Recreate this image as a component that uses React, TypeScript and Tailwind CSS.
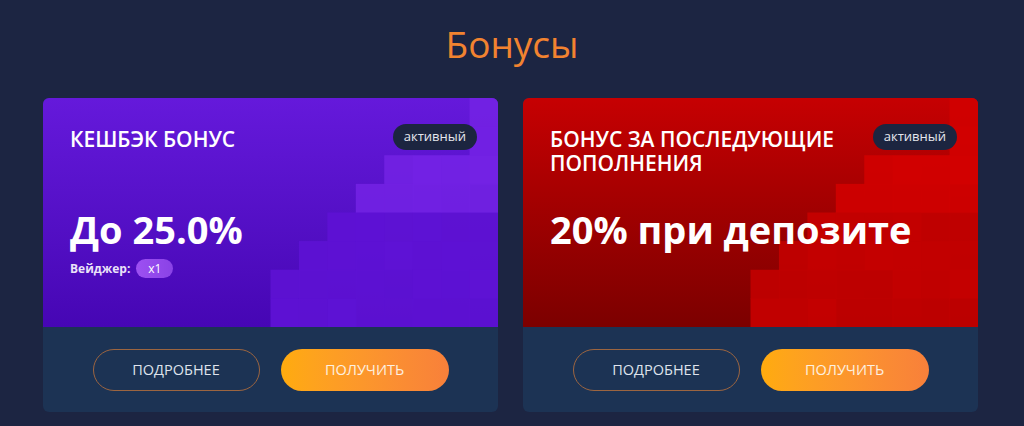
import React from "react";

const COLS = 16;
const ROWS = 8;
const W = 455;
const H = 229;
const tops: Record<number, number> = { 8: 6, 9: 5, 10: 4, 11: 3, 12: 2, 13: 2, 14: 2, 15: 0 };
const shade = [0.0, 0.05, -0.04, 0.07, -0.02, 0.04, -0.05, 0.06, 0.02, -0.04, 0.05, -0.03];

function Stairs({ top, bottom }: { top: string; bottom: string }) {
  const cw = W / COLS;
  const rh = H / ROWS;
  const cells: React.ReactNode[] = [];
  let k = 0;
  for (let c = 8; c < COLS; c++) {
    for (let r = tops[c]; r < ROWS; r++) {
      const s = shade[(c * 7 + r * 3) % shade.length];
      k++;
      const t = r / (ROWS - 1);
      cells.push(
        <rect
          key={k}
          x={c * cw}
          y={r * rh}
          width={cw + 0.5}
          height={rh + 0.5}
          fill={t < 0.5 ? top : bottom}
          opacity={0.92 + s}
        />
      );
    }
  }
  return (
    <svg
      className="absolute inset-0 w-full h-full"
      viewBox={`0 0 ${W} ${H}`}
      preserveAspectRatio="none"
    >
      {cells}
    </svg>
  );
}

function Buttons() {
  return (
    <div className="h-[85px] flex items-center justify-center gap-[21px]">
      <button className="w-[167px] h-[42px] rounded-full border border-[#9c6540] text-[14.5px] text-[#dfe3ec]">
        ПОДРОБНЕЕ
      </button>
      <button className="w-[168px] h-[42px] rounded-full bg-gradient-to-r from-[#ffab0d] to-[#f8803a] text-[14.5px] text-[#fdf0e0]">
        ПОЛУЧИТЬ
      </button>
    </div>
  );
}

function Badge() {
  return (
    <div className="h-[26px] px-[11px] -mr-[6px] rounded-full bg-[#1c2540] text-[13px] text-[#e6e8ef] flex items-center shrink-0">
      активный
    </div>
  );
}

export default function App() {
  return (
    <div
      className="w-[1024px] h-[426px] bg-[#1c2542] text-white overflow-hidden"
      style={{ fontFamily: '"Open Sans", "Noto Sans", sans-serif' }}
    >
      <h1 className="text-center text-[37px] leading-none pt-[25px] text-[#f28330] font-normal">Бонусы</h1>
      <div className="flex gap-[25px] pl-[43px] pt-[36px]">
        {/* Card 1 */}
        <div className="w-[455px] h-[314px] rounded-[6px] overflow-hidden bg-[#1c3354]">
          <div className="relative h-[229px] bg-gradient-to-b from-[#6519db] to-[#4606b4]">
            <Stairs top="#7322e4" bottom="#5e12d4" />
            <div className="relative px-[27px] pt-[26px]">
              <div className="flex justify-between items-start">
                <div className="text-[21px] font-semibold leading-[24px] mt-[3px]">КЕШБЭК БОНУС</div>
                <Badge />
              </div>
              <div className="mt-[55px] text-[38px] font-bold leading-[46px]">До 25.0%</div>
              <div className="mt-[7px] flex items-center gap-[6px]">
                <span className="text-[12px] font-bold text-[#eae2f8]">Вейджер:</span>
                <span className="h-[19px] w-[37px] rounded-full bg-gradient-to-r from-[#9d50f2] to-[#8a42e6] text-[12px] flex items-center justify-center">
                  x1
                </span>
              </div>
            </div>
          </div>
          <Buttons />
        </div>
        {/* Card 2 */}
        <div className="w-[455px] h-[314px] rounded-[6px] overflow-hidden bg-[#1c3354]">
          <div className="relative h-[229px] bg-gradient-to-b from-[#c60002] to-[#7c0000]">
            <Stairs top="#d20000" bottom="#c40000" />
            <div className="relative px-[27px] pt-[26px]">
              <div className="flex justify-between items-start">
                <div className="text-[21px] font-semibold leading-[24px] mt-[3px] max-w-[300px]">
                  <div>БОНУС ЗА ПОСЛЕДУЮЩИЕ</div>
                  <div>ПОПОЛНЕНИЯ</div>
                </div>
                <Badge />
              </div>
              <div className="mt-[31px] text-[38px] font-bold leading-[46px]">20% при депозите</div>
            </div>
          </div>
          <Buttons />
        </div>
      </div>
    </div>
  );
}
